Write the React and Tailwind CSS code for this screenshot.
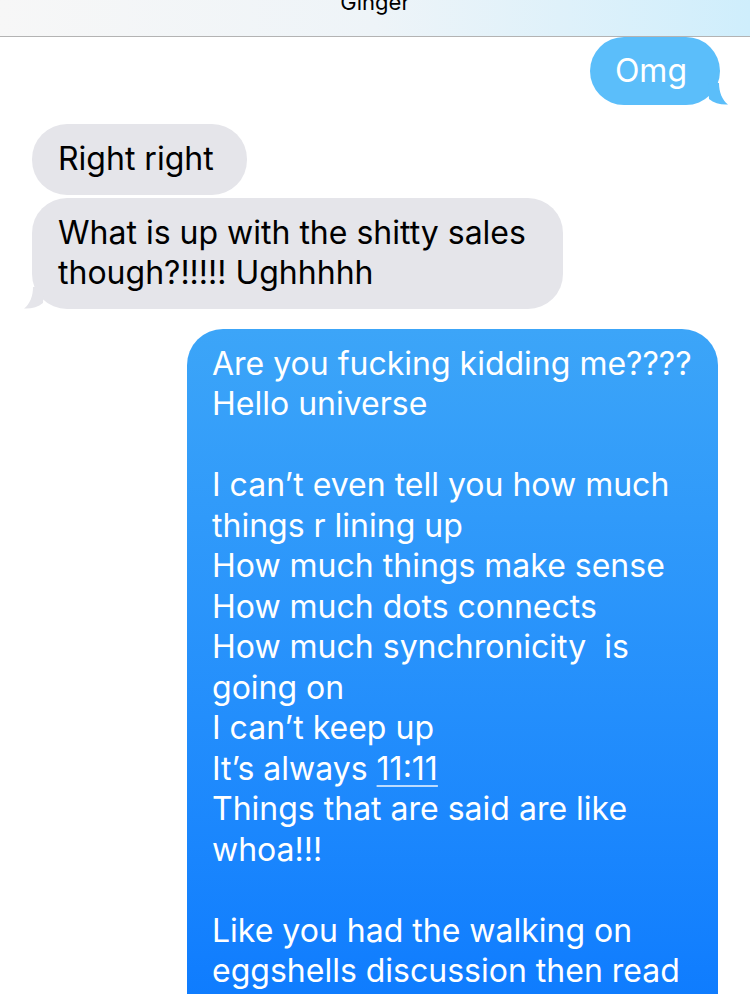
import React from "react";

const font = { fontFamily: "Inter, 'Noto Sans', sans-serif" };

const bigLines = [
  "Are you fucking kidding me????",
  "Hello universe",
  "",
  "I can\u2019t even tell you how much",
  "things r lining up",
  "How much things make sense",
  "How much dots connects",
  "How much synchronicity  is",
  "going on",
  "I can\u2019t keep up",
  "ELEVEN",
  "Things that are said are like",
  "whoa!!!",
  "",
  "Like you had the walking on",
  "eggshells discussion then read",
];

function TailRight({ color }) {
  return (
    <svg className="absolute right-[-10px] bottom-0" width="22" height="22" viewBox="0 0 22 22">
      <path d="M0 0 L11 0 C11 9 14 17 20 21.5 C13 22 6 20 1 16 Z" fill={color} />
    </svg>
  );
}

function TailLeft({ color }) {
  return (
    <svg className="absolute left-[-10px] bottom-0" width="22" height="22" viewBox="0 0 22 22">
      <path d="M22 0 L11 0 C11 9 8 17 2 21.5 C9 22 16 20 21 16 Z" fill={color} />
    </svg>
  );
}

export default function App() {
  return (
    <div className="w-[750px] h-[994px] overflow-hidden bg-white text-[32px] leading-[40.5px]" style={font}>
      {/* Header */}
      <div className="h-[37px] border-b border-[#b3b3b3] bg-gradient-to-r from-[#f7f7f7] via-[#eef4f8] to-[#cfeefc] flex justify-center overflow-hidden">
        <span className="text-[22px] leading-none -mt-[9px] text-black">Ginger</span>
      </div>

      <div className="flex flex-col">
        {/* Omg */}
        <div className="flex justify-end pr-[30px]">
          <div className="relative bg-[#5bbefa] text-white rounded-[34px] h-[68px] pl-[25px] pr-[33px] flex items-center">
            Omg
            <TailRight color="#5bbefa" />
          </div>
        </div>

        {/* Right right */}
        <div className="flex justify-start pl-[32px] mt-[19px]">
          <div className="bg-[#e5e5ea] text-black rounded-[35px] pl-[26px] pr-[33px] py-[15px]">
            Right right
          </div>
        </div>

        {/* What is up */}
        <div className="flex justify-start pl-[32px] mt-[3px]">
          <div className="relative bg-[#e5e5ea] text-black rounded-[35px] pl-[26px] pr-[30px] py-[15px] w-[531px]">
            <div className="whitespace-nowrap">What is up with the shitty sales</div>
            <div className="whitespace-nowrap">though?!!!!! Ughhhhh</div>
            <TailLeft color="#e5e5ea" />
          </div>
        </div>

        {/* Big blue */}
        <div className="flex justify-end pr-[32px] mt-[20px]">
          <div className="relative w-[531px] rounded-[36px] bg-gradient-to-b from-[#3ca5f8] to-[#0776ff] text-white pl-[25px] pr-[20px] pt-[15px] h-[760px]">
            {bigLines.map((line, i) =>
              line === "ELEVEN" ? (
                <div key={i} className="whitespace-nowrap">
                  It&rsquo;s always <span className="underline decoration-[1.5px] underline-offset-[5px] decoration-white/70">11:11</span>
                </div>
              ) : (
                <div key={i} className="whitespace-pre h-[40.5px]">
                  {line}
                </div>
              )
            )}
          </div>
        </div>
      </div>
    </div>
  );
}
